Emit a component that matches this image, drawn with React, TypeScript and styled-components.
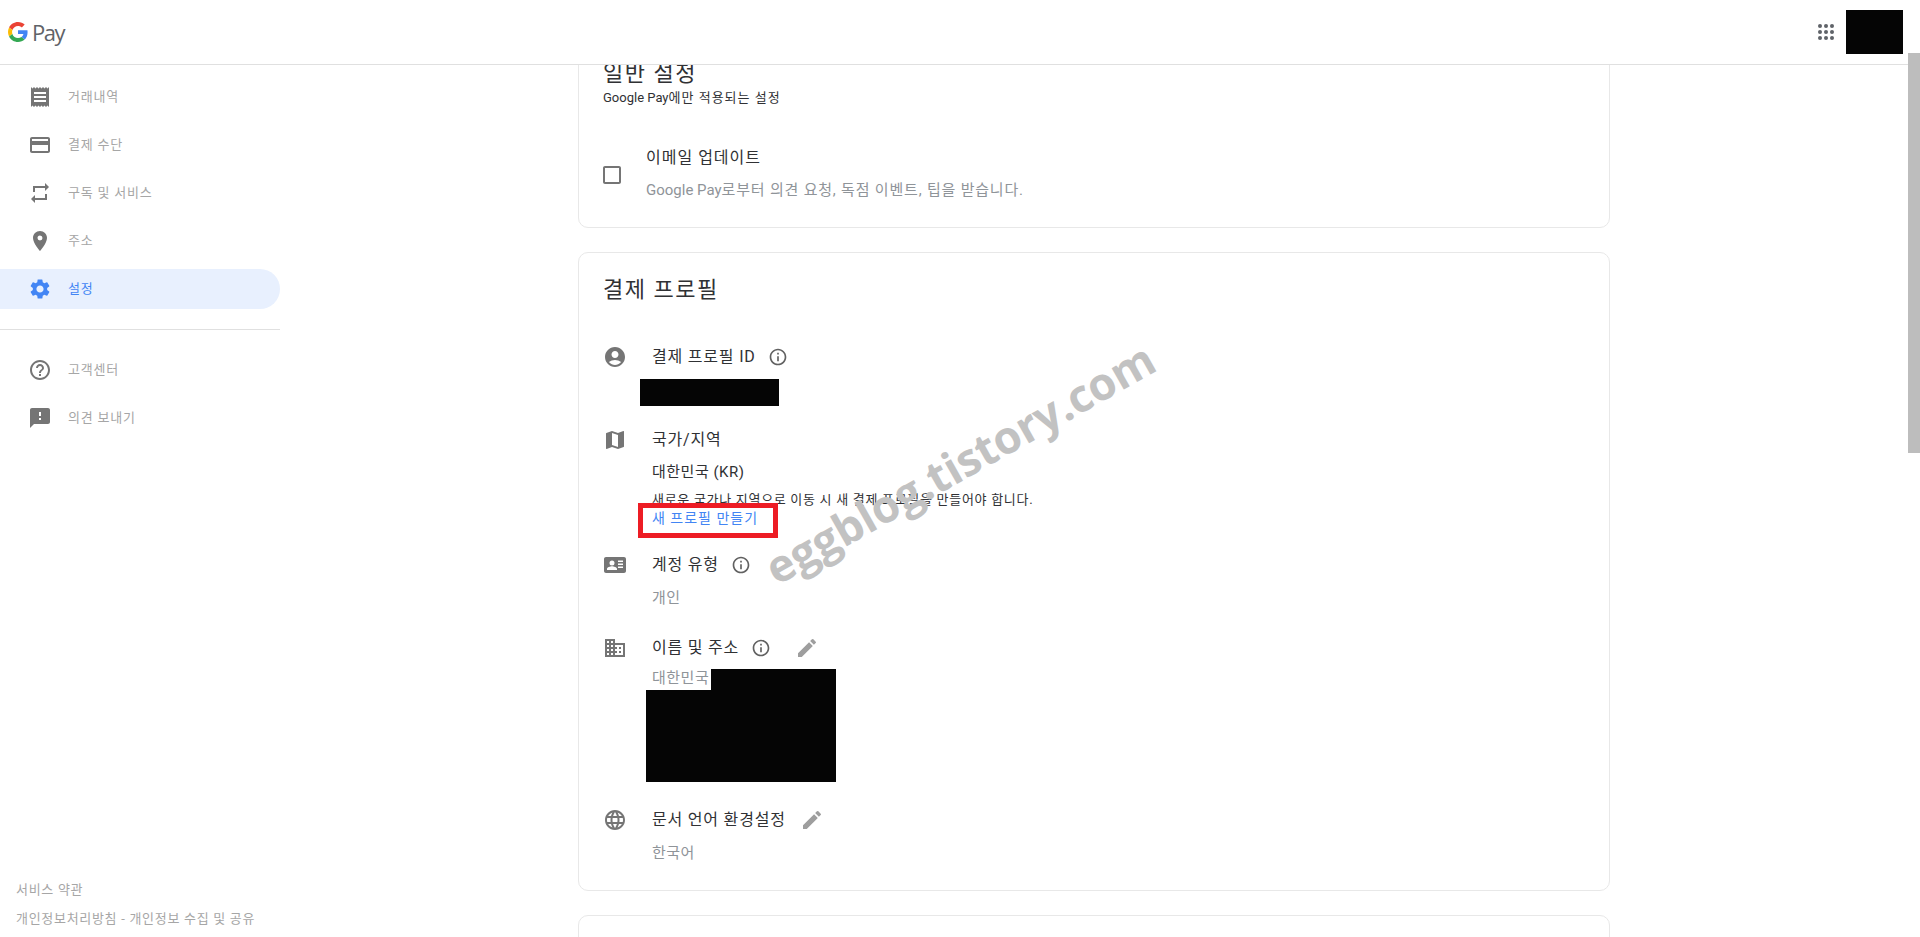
import React from 'react'
import styled, { createGlobalStyle } from 'styled-components'
import {
    MdReceipt, MdCreditCard, MdRepeat, MdPlace, MdSettings, MdHelpOutline, MdFeedback,
    MdAccountCircle, MdMap, MdInfoOutline, MdBusiness, MdLanguage, MdEdit,
    MdCheckBoxOutlineBlank,
} from 'react-icons/md'

const GlobalStyle = createGlobalStyle`
    html, body {
        margin: 0;
        height: 100%;
        overflow: hidden;
        background: #fff;
        font-family: Roboto, "Noto Sans CJK KR", sans-serif;
    }
    * { box-sizing: border-box; }
`

const Page = styled.div`
    position: relative;
    display: flex;
    flex-direction: column;
    height: 937px;
    overflow: hidden;
`

const Header = styled.header`
    flex: none;
    display: flex;
    align-items: center;
    height: 65px;
    padding: 0 17px 0 8px;
    border-bottom: 1px solid #e0e0e0;
`

const Logo = styled.div`
    display: flex;
    align-items: center;
    gap: 4px;
    margin-right: auto;
`

const LogoWord = styled.span`
    font-family: "Open Sans", sans-serif;
    font-size: 22px;
    line-height: 30px;
    letter-spacing: -1.5px;
    color: #5f6368;
`

const AppsButton = styled.div`
    display: flex;
    color: #5f6368;
    margin-right: 8px;
`

const Redacted = styled.div<{ $w?: number; $h: number }>`
    flex: ${p => (p.$w ? 'none' : '1')};
    width: ${p => (p.$w ? `${p.$w}px` : 'auto')};
    height: ${p => p.$h}px;
    background: #050505;
`

const Columns = styled.div`
    flex: 1;
    display: flex;
    min-height: 0;
`

const Sidebar = styled.nav`
    flex: none;
    display: flex;
    flex-direction: column;
    width: 280px;
    padding: 12px 0 9px;
`

const NavGroup = styled.div`
    display: flex;
    flex-direction: column;
    gap: 8px;
`

const NavItem = styled.div<{ $active?: boolean }>`
    display: flex;
    align-items: center;
    gap: 16px;
    height: 40px;
    padding-left: 28px;
    border-radius: 0 20px 20px 0;
    background: ${p => (p.$active ? '#e8f0fe' : 'transparent')};
    color: ${p => (p.$active ? '#4285f4' : '#757575')};
    font-size: 13px;
    letter-spacing: 0.8px;
    svg { flex: none; }
`

const NavLabel = styled.span<{ $active?: boolean }>`
    padding-bottom: 3px;
    color: ${p => (p.$active ? '#4285f4' : '#a6a6a6')};
`

const NavDivider = styled.hr`
    margin: 20px 0;
    border: 0;
    border-top: 1px solid #e0e0e0;
`

const SideFooter = styled.div`
    display: flex;
    flex-direction: column;
    gap: 11px;
    margin-top: auto;
    padding-left: 16px;
    font-size: 13px;
    line-height: 18px;
    letter-spacing: 0.7px;
    color: #a6a6a6;
`

const Main = styled.main`
    flex: 1;
    min-width: 0;
    overflow: hidden;
    padding-left: 298px;
`

const Card = styled.section<{ $top?: number }>`
    width: 1032px;
    margin-top: ${p => p.$top ?? 24}px;
    padding: 21px 24px 27px;
    border: 1px solid #e8e8e8;
    border-radius: 10px;
`

const CardTitle = styled.h2`
    margin: 0;
    font-size: 22px;
    font-weight: 400;
    line-height: 32px;
    letter-spacing: 1.5px;
    color: #303134;
`

const Latin = styled.span`
    letter-spacing: 0;
`

const CardNote = styled.p`
    margin: -1px 0 0;
    font-size: 13px;
    line-height: 18px;
    letter-spacing: 1px;
    color: #303134;
`

const OptionRow = styled.div`
    display: flex;
    gap: 22px;
    margin-top: 39px;
`

const CheckIcon = styled.div`
    display: flex;
    margin: 17px 0 0 -3px;
    color: #757575;
`

const OptionLabel = styled.div`
    font-size: 16px;
    line-height: 24px;
    letter-spacing: 1px;
    color: #303134;
`

const OptionHint = styled.div`
    margin-top: 10px;
    font-size: 15px;
    line-height: 20px;
    letter-spacing: 0.8px;
    color: #8f9499;
`

const Row = styled.div<{ $top: number }>`
    display: flex;
    gap: 25px;
    margin-top: ${p => p.$top}px;
`

const RowIcon = styled.div`
    flex: none;
    display: flex;
    color: #757575;
`

const RowBody = styled.div`
    flex: 1;
    min-width: 0;
`

const RowLabel = styled.div`
    display: flex;
    align-items: center;
    height: 24px;
    font-size: 16px;
    line-height: 24px;
    letter-spacing: 0.8px;
    color: #303134;
`

const InfoIcon = styled.span<{ $gap: number }>`
    display: flex;
    margin-left: ${p => p.$gap}px;
    color: #616161;
`

const EditIcon = styled.span<{ $gap: number }>`
    display: flex;
    margin-left: ${p => p.$gap}px;
    color: #9e9e9e;
`

const RowValue = styled.div<{ $dark?: boolean; $top?: number }>`
    margin-top: ${p => p.$top ?? 11}px;
    font-size: 15px;
    line-height: 20px;
    letter-spacing: 0.5px;
    color: ${p => (p.$dark ? '#303134' : '#8f9499')};
`

const IdBlock = styled.div`
    margin: 10px 0 22px -12px;
`

const SmallNote = styled.div`
    margin-top: 9px;
    font-size: 13px;
    line-height: 18px;
    letter-spacing: 0.7px;
    color: #303134;
`

const LinkWrap = styled.div`
    position: relative;
    font-size: 14px;
    line-height: 18px;
    letter-spacing: 1px;
    color: #4285f4;
`

const Highlight = styled.div`
    position: absolute;
    left: -14px;
    top: -6px;
    width: 140px;
    height: 35px;
    border: 5px solid #ed1c24;
`

const AddressBlock = styled.div`
    width: 190px;
    margin: 9px 0 0 -6px;
`

const AddressTop = styled.div`
    display: flex;
`

const AddressCountry = styled.div`
    flex: none;
    width: 65px;
    height: 21px;
    padding-left: 6px;
    font-size: 15px;
    line-height: 19px;
    letter-spacing: 0.5px;
    white-space: nowrap;
    color: #8f9499;
`

const Watermark = styled.div`
    position: absolute;
    left: 740px;
    top: 433px;
    transform: rotate(-29.5deg);
    font-family: "Open Sans", sans-serif;
    font-size: 45px;
    font-weight: 700;
    line-height: 60px;
    letter-spacing: -0.2px;
    color: #c2c2c2;
    white-space: nowrap;
    pointer-events: none;
`

const ScrollThumb = styled.div`
    position: absolute;
    right: 0;
    top: 53px;
    width: 12px;
    height: 400px;
    background: #bdbdbd;
`

function GoogleG() {
    return (
        <svg width="20" height="20" viewBox="0 0 48 48">
            <path fill="#4285F4" d="M46.98 24.55c0-1.57-.15-3.09-.38-4.55H24v9.02h12.94c-.58 2.96-2.26 5.48-4.78 7.18l7.73 6c4.51-4.18 7.09-10.36 7.09-17.65z" />
            <path fill="#EA4335" d="M24 9.5c3.54 0 6.71 1.22 9.21 3.6l6.85-6.85C35.9 2.38 30.47 0 24 0 14.62 0 6.51 5.38 2.56 13.22l7.98 6.19C12.43 13.72 17.74 9.5 24 9.5z" />
            <path fill="#FBBC05" d="M10.53 28.59c-.48-1.45-.76-2.99-.76-4.59s.27-3.14.76-4.59l-7.98-6.19C.92 16.46 0 20.12 0 24c0 3.88.92 7.54 2.56 10.78l7.97-6.19z" />
            <path fill="#34A853" d="M24 48c6.48 0 11.93-2.13 15.89-5.81l-7.73-6c-2.15 1.45-4.92 2.3-8.16 2.3-6.26 0-11.57-4.22-13.47-9.91l-7.98 6.19C6.51 42.62 14.62 48 24 48z" />
        </svg>
    )
}

// round-dotted app launcher
function AppsDots() {
    const spots = [6, 12, 18]
    return (
        <svg width="24" height="24" viewBox="0 0 24 24" fill="currentColor">
            {spots.map(y => spots.map(x => <circle key={`${x}-${y}`} cx={x} cy={y} r="2" />))}
        </svg>
    )
}

// person card with three lines on the right
function ContactCard() {
    return (
        <svg width="24" height="24" viewBox="0 0 24 24" fill="currentColor">
            <path fillRule="evenodd" d="M3 4h18c1.100 0 2 .9 2 2v12c0 1.100-.9 2-2 2H3c-1.100 0-2-.9-2-2V6c0-1.100.9-2 2-2zm6 3.500a2.500 2.500 0 1 0 0 5 2.500 2.500 0 0 0 0-5zM4 17h10v-1c0-1.800-3.300-2.700-5-2.700S4 14.200 4 16v1zm11-9.500V9h5V7.500h-5zm0 3V12h5v-1.500h-5zm0 3V15h5v-1.500h-5z" />
        </svg>
    )
}

const navMain = [
    { icon: MdReceipt, label: '거래내역' },
    { icon: MdCreditCard, label: '결제 수단' },
    { icon: MdRepeat, label: '구독 및 서비스' },
    { icon: MdPlace, label: '주소' },
    { icon: MdSettings, label: '설정', active: true },
]

const navHelp = [
    { icon: MdHelpOutline, label: '고객센터' },
    { icon: MdFeedback, label: '의견 보내기' },
]

function NavList({ items }: { items: { icon: typeof MdReceipt; label: string; active?: boolean }[] }) {
    return (
        <NavGroup>
            {items.map(item => (
                <NavItem key={item.label} $active={item.active}>
                    <item.icon size={24} />
                    <NavLabel $active={item.active}>{item.label}</NavLabel>
                </NavItem>
            ))}
        </NavGroup>
    )
}

export default function App() {
    return (
        <Page>
            <GlobalStyle />
            <Header>
                <Logo>
                    <GoogleG />
                    <LogoWord>Pay</LogoWord>
                </Logo>
                <AppsButton><AppsDots /></AppsButton>
                <Redacted $w={57} $h={44} />
            </Header>
            <Columns>
                <Sidebar>
                    <NavList items={navMain} />
                    <NavDivider />
                    <NavList items={navHelp} />
                    <SideFooter>
                        <div>서비스 약관</div>
                        <div>개인정보처리방침 - 개인정보 수집 및 공유</div>
                    </SideFooter>
                </Sidebar>
                <Main>
                    <Card $top={-29}>
                        <CardTitle>일반 설정</CardTitle>
                        <CardNote><Latin>Google Pay</Latin>에만 적용되는 설정</CardNote>
                        <OptionRow>
                            <CheckIcon><MdCheckBoxOutlineBlank size={24} /></CheckIcon>
                            <div>
                                <OptionLabel>이메일 업데이트</OptionLabel>
                                <OptionHint><Latin>Google Pay</Latin>로부터 의견 요청, 독점 이벤트, 팁을 받습니다.</OptionHint>
                            </div>
                        </OptionRow>
                    </Card>
                    <Card>
                        <CardTitle>결제 프로필</CardTitle>
                        <Row $top={39}>
                            <RowIcon><MdAccountCircle size={24} /></RowIcon>
                            <RowBody>
                                <RowLabel>
                                    결제 프로필 ID
                                    <InfoIcon $gap={12}><MdInfoOutline size={20} /></InfoIcon>
                                </RowLabel>
                                <IdBlock><Redacted $w={139} $h={27} /></IdBlock>
                            </RowBody>
                        </Row>
                        <Row $top={0}>
                            <RowIcon><MdMap size={24} /></RowIcon>
                            <RowBody>
                                <RowLabel>국가/지역</RowLabel>
                                <RowValue $dark $top={10}>대한민국 (KR)</RowValue>
                                <SmallNote>새로운 국가나 지역으로 이동 시 새 결제 프로필을 만들어야 합니다.</SmallNote>
                                <LinkWrap>
                                    새 프로필 만들기
                                    <Highlight />
                                </LinkWrap>
                            </RowBody>
                        </Row>
                        <Row $top={26}>
                            <RowIcon><ContactCard /></RowIcon>
                            <RowBody>
                                <RowLabel>
                                    계정 유형
                                    <InfoIcon $gap={12}><MdInfoOutline size={20} /></InfoIcon>
                                </RowLabel>
                                <RowValue>개인</RowValue>
                            </RowBody>
                        </Row>
                        <Row $top={28}>
                            <RowIcon><MdBusiness size={24} /></RowIcon>
                            <RowBody>
                                <RowLabel>
                                    이름 및 주소
                                    <InfoIcon $gap={12}><MdInfoOutline size={20} /></InfoIcon>
                                    <EditIcon $gap={24}><MdEdit size={24} /></EditIcon>
                                </RowLabel>
                                <AddressBlock>
                                    <AddressTop>
                                        <AddressCountry>대한민국</AddressCountry>
                                        <Redacted $h={21} />
                                    </AddressTop>
                                    <Redacted $h={92} />
                                </AddressBlock>
                            </RowBody>
                        </Row>
                        <Row $top={26}>
                            <RowIcon><MdLanguage size={24} /></RowIcon>
                            <RowBody>
                                <RowLabel>
                                    문서 언어 환경설정
                                    <EditIcon $gap={14}><MdEdit size={24} /></EditIcon>
                                </RowLabel>
                                <RowValue>한국어</RowValue>
                            </RowBody>
                        </Row>
                    </Card>
                    <Card>
                        <CardTitle>&nbsp;</CardTitle>
                    </Card>
                </Main>
            </Columns>
            <Watermark>eggblog.tistory.com</Watermark>
            <ScrollThumb />
        </Page>
    )
}
